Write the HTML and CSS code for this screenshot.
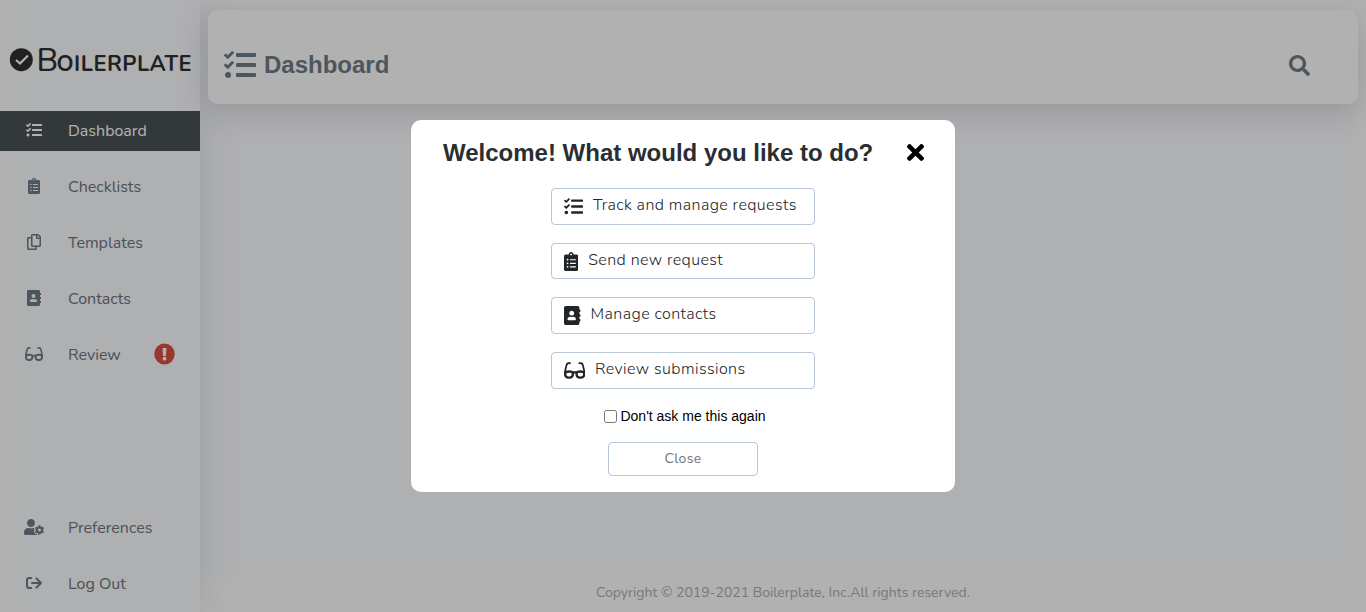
FILE: index.html
```html
<!DOCTYPE html>
<html lang="en">
<head>
<meta charset="utf-8">
<title>Dashboard</title>
<link rel="stylesheet" href="styles.css">
</head>
<body>
<svg class="sprite" aria-hidden="true">
  <symbol id="tasks" viewBox="0 0 512 512"><path d="M139.61 35.5a12 12 0 0 0-17 0L58.93 98.81l-22.7-22.12a12 12 0 0 0-17 0L3.53 92.41a12 12 0 0 0 0 17l47.59 47.4a12.78 12.78 0 0 0 17.61 0l15.59-15.62L156.52 69a12.09 12.09 0 0 0 .09-17zm0 159.19a12 12 0 0 0-17 0l-63.68 63.72-22.7-22.1a12 12 0 0 0-17 0L3.53 252a12 12 0 0 0 0 17L51 316.5a12.77 12.77 0 0 0 17.6 0l15.7-15.69 72.2-72.22a12 12 0 0 0 .09-16.9zM64 368c-26.49 0-48.59 21.5-48.59 48S37.53 464 64 464a48 48 0 0 0 0-96zm432 16H208a16 16 0 0 0-16 16v32a16 16 0 0 0 16 16h288a16 16 0 0 0 16-16v-32a16 16 0 0 0-16-16zm0-320H208a16 16 0 0 0-16 16v32a16 16 0 0 0 16 16h288a16 16 0 0 0 16-16V80a16 16 0 0 0-16-16zm0 160H208a16 16 0 0 0-16 16v32a16 16 0 0 0 16 16h288a16 16 0 0 0 16-16v-32a16 16 0 0 0-16-16z"/></symbol>
  <symbol id="clipboard" viewBox="0 0 384 512"><path d="M336 64h-80c0-35.3-28.7-64-64-64s-64 28.7-64 64H48C21.5 64 0 85.5 0 112v352c0 26.5 21.5 48 48 48h288c26.500 0 48-21.500 48-48V112c0-26.500-21.500-48-48-48zM96 424c-13.300 0-24-10.700-24-24s10.700-24 24-24 24 10.700 24 24-10.700 24-24 24zm0-96c-13.300 0-24-10.700-24-24s10.700-24 24-24 24 10.700 24 24-10.700 24-24 24zm0-96c-13.300 0-24-10.700-24-24s10.700-24 24-24 24 10.700 24 24-10.700 24-24 24zm96-192c13.300 0 24 10.700 24 24s-10.700 24-24 24-24-10.700-24-24 10.700-24 24-24zm128 368c0 4.400-3.600 8-8 8H168c-4.400 0-8-3.600-8-8v-16c0-4.400 3.600-8 8-8h144c4.400 0 8 3.600 8 8v16zm0-96c0 4.400-3.600 8-8 8H168c-4.400 0-8-3.600-8-8v-16c0-4.400 3.600-8 8-8h144c4.400 0 8 3.600 8 8v16zm0-96c0 4.400-3.600 8-8 8H168c-4.400 0-8-3.600-8-8v-16c0-4.400 3.600-8 8-8h144c4.400 0 8 3.600 8 8v16z"/></symbol>
  <symbol id="copy" viewBox="0 0 448 512"><path d="M433.941 65.941l-51.882-51.882A48 48 0 0 0 348.118 0H176c-26.51 0-48 21.49-48 48v48H48c-26.51 0-48 21.49-48 48v320c0 26.51 21.49 48 48 48h224c26.51 0 48-21.49 48-48v-48h80c26.51 0 48-21.49 48-48V99.882a48 48 0 0 0-14.059-33.941zM266 464H54a6 6 0 0 1-6-6V150a6 6 0 0 1 6-6h74v224c0 26.51 21.49 48 48 48h96v42a6 6 0 0 1-6 6zm128-96H182a6 6 0 0 1-6-6V54a6 6 0 0 1 6-6h106v88c0 13.255 10.745 24 24 24h88v202a6 6 0 0 1-6 6zm6-256h-64V48h9.632c1.591 0 3.117.632 4.243 1.757l48.368 48.368a6 6 0 0 1 1.757 4.243V112z"/></symbol>
  <symbol id="contacts" viewBox="0 0 448 512"><path d="M436 160c6.600 0 12-5.400 12-12v-40c0-6.600-5.400-12-12-12h-20V48c0-26.500-21.500-48-48-48H48C21.500 0 0 21.500 0 48v416c0 26.500 21.500 48 48 48h320c26.500 0 48-21.500 48-48v-48h20c6.600 0 12-5.400 12-12v-40c0-6.600-5.400-12-12-12h-20v-64h20c6.600 0 12-5.400 12-12v-40c0-6.600-5.400-12-12-12h-20v-64h20zm-228-32c35.300 0 64 28.700 64 64s-28.700 64-64 64-64-28.700-64-64 28.700-64 64-64zm112 236.800c0 10.600-10 19.200-22.400 19.200H118.400C106 384 96 375.400 96 364.800v-19.200c0-31.800 30.100-57.600 67.200-57.600h5c12.300 5.100 25.700 8 39.800 8s27.600-2.900 39.800-8h5c37.100 0 67.200 25.800 67.200 57.600v19.200z"/></symbol>
  <symbol id="glasses" viewBox="0 0 576 512"><path d="M574.1 280.37L528.75 98.66c-5.91-23.7-21.59-44.05-43-55.81-21.44-11.73-46.97-14.11-70.19-6.33l-15.25 5.08c-8.39 2.79-12.92 11.86-10.12 20.24l5.06 15.18c2.79 8.38 11.85 12.91 20.23 10.12l13.18-4.39c10.87-3.62 23-3.57 33.16 1.73 10.29 5.37 17.57 14.56 20.37 25.82l38.46 153.82c-22.19-6.81-49.79-12.46-81.2-12.46-34.77 0-73.98 7.02-114.85 26.74h-73.18c-40.87-19.74-80.08-26.75-114.86-26.75-31.42 0-59.02 5.65-81.21 12.46l38.46-153.83c2.79-11.25 10.09-20.45 20.38-25.81 10.16-5.3 22.28-5.35 33.15-1.73l13.17 4.39c8.38 2.79 17.44-1.74 20.23-10.12l5.06-15.18c2.8-8.38-1.73-17.45-10.12-20.24l-15.25-5.08c-23.22-7.78-48.75-5.41-70.19 6.33-21.41 11.77-37.09 32.11-43 55.8L1.9 280.37A64.218 64.218 0 0 0 0 295.86v70.25C0 429.01 51.58 480 115.2 480h37.12c60.28 0 110.37-45.94 114.88-105.37l2.93-38.63h35.75l2.93 38.63C313.31 434.06 363.4 480 423.68 480h37.12c63.62 0 115.2-50.99 115.2-113.88v-70.25c0-5.23-.64-10.43-1.9-15.5zm-370.72 89.42c-1.97 25.91-24.4 46.21-51.06 46.21H115.2C86.97 416 64 393.62 64 366.11v-37.54c18.12-6.49 43.42-12.92 72.58-12.92 23.86 0 47.26 4.33 69.93 12.92l-3.13 41.22zM512 366.12c0 27.51-22.97 49.88-51.2 49.88h-37.12c-26.67 0-49.1-20.3-51.06-46.21l-3.13-41.22c22.67-8.59 46.08-12.92 69.95-12.92 29.12 0 54.43 6.44 72.55 12.93v37.54z"/></symbol>
  <symbol id="usercog" viewBox="0 0 640 512"><path d="M610.5 373.3c2.600-14.100 2.600-28.500 0-42.600l25.800-14.900c3-1.700 4.300-5.200 3.300-8.500-6.700-21.600-18.200-41.200-33.200-57.400-2.300-2.500-6-3.100-9-1.400l-25.800 14.900c-10.900-9.300-23.400-16.500-36.900-21.300v-29.800c0-3.400-2.400-6.400-5.700-7.100-22.300-5-45-4.800-66.200 0-3.300.7-5.700 3.700-5.700 7.100v29.800c-13.500 4.800-26 12-36.900 21.300l-25.800-14.900c-2.900-1.700-6.700-1.100-9 1.400-15 16.200-26.500 35.800-33.200 57.400-1 3.300.4 6.800 3.300 8.500l25.800 14.900c-2.600 14.100-2.600 28.500 0 42.600l-25.800 14.900c-3 1.700-4.300 5.200-3.300 8.500 6.700 21.600 18.200 41.100 33.200 57.400 2.300 2.500 6 3.100 9 1.400l25.800-14.900c10.900 9.300 23.400 16.500 36.900 21.300v29.800c0 3.400 2.400 6.400 5.700 7.100 22.300 5 45 4.800 66.200 0 3.300-.7 5.700-3.700 5.700-7.100v-29.800c13.500-4.800 26-12 36.900-21.300l25.800 14.900c2.900 1.700 6.700 1.100 9-1.400 15-16.200 26.500-35.800 33.200-57.400 1-3.300-.4-6.800-3.300-8.500l-25.800-14.900zM496 400.500c-26.800 0-48.500-21.800-48.500-48.500s21.800-48.500 48.500-48.500 48.500 21.800 48.500 48.500-21.700 48.500-48.500 48.500zM224 256c70.700 0 128-57.300 128-128S294.700 0 224 0 96 57.300 96 128s57.300 128 128 128zm201.200 226.500c-2.300-1.200-4.600-2.600-6.800-3.900l-7.900 4.600c-6 3.400-12.800 5.300-19.600 5.300-10.900 0-21.400-4.600-28.900-12.600-18.300-19.800-32.300-43.900-40.200-69.600-5.500-17.700 1.900-36.400 17.900-45.700l7.900-4.600c-.1-2.600-.1-5.200 0-7.800l-7.900-4.600c-16-9.200-23.400-28-17.900-45.700.9-2.900 2.200-5.800 3.200-8.700-3.800-.3-7.500-1.200-11.400-1.200h-16.700c-22.200 10.200-46.900 16-72.900 16s-50.600-5.800-72.900-16h-16.700C60.200 288 0 348.200 0 422.400V464c0 26.500 21.500 48 48 48h352c10.100 0 19.500-3.200 27.200-8.500-1.200-3.800-2-7.700-2-11.800v-9.200z"/></symbol>
  <symbol id="logout" viewBox="0 0 16 16"><path fill="none" stroke="currentColor" stroke-width="2" stroke-linecap="round" stroke-linejoin="round" d="M5.200 2.900H3.400Q1 2.900 1 5.300v5.400q0 2.400 2.400 2.400h1.800M6 8h9M10.500 3.500 15 8l-4.500 4.500"/></symbol>
  <symbol id="search" viewBox="0 0 512 512"><path d="M505 442.700L405.300 343c-4.500-4.500-10.600-7-17-7H372c27.600-35.300 44-79.700 44-128C416 93.100 322.900 0 208 0S0 93.100 0 208s93.100 208 208 208c48.300 0 92.700-16.400 128-44v16.300c0 6.400 2.500 12.500 7 17l99.700 99.700c9.400 9.400 24.600 9.400 33.900 0l28.300-28.300c9.400-9.400 9.400-24.600.1-34zM208 336c-70.700 0-128-57.200-128-128 0-70.700 57.200-128 128-128 70.700 0 128 57.200 128 128 0 70.700-57.200 128-128 128z"/></symbol>
  <symbol id="times" viewBox="0 80 352 352"><path d="M242.72 256l100.07-100.07c12.28-12.28 12.28-32.19 0-44.48l-22.24-22.24c-12.28-12.28-32.19-12.28-44.48 0L176 189.28 75.93 89.21c-12.28-12.28-32.19-12.28-44.48 0L9.21 111.45c-12.28 12.28-12.28 32.19 0 44.48L109.28 256 9.21 356.07c-12.28 12.28-12.28 32.19 0 44.48l22.24 22.24c12.28 12.28 32.2 12.28 44.48 0L176 322.72l100.07 100.07c12.28 12.28 32.2 12.28 44.48 0l22.24-22.24c12.28-12.28 12.28-32.19 0-44.48L242.72 256z"/></symbol>
</svg>

<div class="app">
  <aside class="sidebar">
    <svg class="logo" viewBox="0 0 200 60">
      <circle cx="21.300" cy="29.700" r="11.500"/>
      <path class="logo-check" d="m16 30 4 3.500 8-8"/>
      <text class="logo-cap" x="36.500" y="41">B</text>
      <text class="logo-rest" x="56.500" y="41" textLength="135" lengthAdjust="spacing">OILERPLATE</text>
    </svg>
    <nav class="nav">
      <a class="nav-item active"><span class="nav-icon"><svg class="i16"><use href="#tasks"/></svg></span><span>Dashboard</span></a>
      <a class="nav-item"><span class="nav-icon"><svg class="i12"><use href="#clipboard"/></svg></span><span>Checklists</span></a>
      <a class="nav-item"><span class="nav-icon"><svg class="i14"><use href="#copy"/></svg></span><span>Templates</span></a>
      <a class="nav-item"><span class="nav-icon"><svg class="i14"><use href="#contacts"/></svg></span><span>Contacts</span></a>
      <a class="nav-item"><span class="nav-icon"><svg class="i18"><use href="#glasses"/></svg></span><span>Review</span>
        <svg class="alert" viewBox="0 0 21 22"><ellipse cx="10.500" cy="11" rx="10.200" ry="10.600" fill="#dc5044"/><path fill="#fff" d="M8.500 5h4l-.6 8H9.100z"/><circle cx="10.500" cy="15.700" r="1.900" fill="#fff"/></svg></a>
    </nav>
    <nav class="nav nav-bottom">
      <a class="nav-item"><span class="nav-icon"><svg class="i20"><use href="#usercog"/></svg></span><span>Preferences</span></a>
      <a class="nav-item"><span class="nav-icon"><svg class="i16"><use href="#logout"/></svg></span><span>Log Out</span></a>
    </nav>
  </aside>
  <main class="main">
    <div class="content">
      <header class="header">
        <svg class="header-icon"><use href="#tasks"/></svg>
        <h1 class="header-title">Dashboard</h1>
        <svg class="search"><use href="#search"/></svg>
      </header>
    </div>
    <footer class="footer"><span>Copyright © 2019-2021 Boilerplate, Inc.All rights reserved.</span></footer>
  </main>
</div>

<div class="overlay">
  <section class="modal">
    <div class="modal-head">
      <h2 class="modal-title">Welcome! What would you like to do?</h2>
      <svg class="close-x"><use href="#times"/></svg>
    </div>
    <div class="choices">
      <button class="choice"><svg class="c-tasks"><use href="#tasks"/></svg><span>Track and manage requests</span></button>
      <button class="choice"><svg class="c-clip"><use href="#clipboard"/></svg><span>Send new request</span></button>
      <button class="choice"><svg class="c-book"><use href="#contacts"/></svg><span>Manage contacts</span></button>
      <button class="choice"><svg class="c-glass"><use href="#glasses"/></svg><span>Review submissions</span></button>
    </div>
    <label class="ask"><input class="ask-box" type="checkbox"><span>Don't ask me this again</span></label>
    <button class="close-btn">Close</button>
  </section>
</div>
</body>
</html>
```
FILE: styles.css
```css
* { box-sizing: border-box; }
body { margin: 0; height: 612px; overflow: hidden; background: #fefefe; font-family: Nunito, Lato, "Noto Sans", sans-serif; }
svg { fill: currentColor; flex: none; display: block; }
.sprite { position: absolute; width: 0; height: 0; }
.app { display: flex; height: 612px; }

.sidebar { z-index: 1; width: 200px; flex: none; display: flex; flex-direction: column; padding: 30px 0 8px; background: linear-gradient(90deg, #fdfdfc, #fbfcfe 12%); box-shadow: 0 0 40px rgba(50, 75, 105, .14); }
.logo { width: 200px; height: 60px; color: #303030; margin-bottom: 21px; overflow: visible; }
.logo-check { fill: none; stroke: #fff; stroke-width: 2.200; }
.logo-cap { font: 500 32px Nunito, Lato, sans-serif; }
.logo-rest { font: 700 21.800px Nunito, Lato, sans-serif; }
.nav { display: flex; flex-direction: column; gap: 16px; }
.nav-bottom { margin-top: auto; }
.nav-item { display: flex; align-items: center; height: 40px; color: #6c757d; font-size: 16px; white-space: nowrap; }
.active { background: #495155; color: #fff; }
.nav-icon { width: 68px; flex: none; display: flex; justify-content: center; align-items: center; padding-bottom: 2px; color: #707b86; }
.active .nav-icon { color: #fff; }
.i12 { width: 12px; height: 16px; }
.i14 { width: 14px; height: 16px; }
.i16 { width: 16px; height: 16px; }
.i18 { width: 18px; height: 16px; }
.i20 { width: 20px; height: 16px; }
.alert { width: 21px; height: 22px; margin: 0 0 2px 33px; }

.main { flex: 1; display: flex; flex-direction: column; }
.content { flex: 1; margin: 10px 8px 0 0; padding-left: 8px; background: #fbfcff; }
.header { position: relative; z-index: 2; display: flex; align-items: center; height: 94px; padding: 16px 48px 0 16px; border-radius: 10px; background: #fefefe; color: #707b86; box-shadow: 0 8px 32px rgba(40, 44, 54, .18); }
.header-icon { width: 32px; height: 32px; }
.header-title { margin: 0 auto 0 8px; font: bold 24px "Liberation Sans", Arial, sans-serif; }
.search { width: 21px; height: 21px; }
.footer { display: flex; justify-content: center; align-items: center; height: 38px; padding-bottom: 2px; background: #fefefe; color: #adadad; font-size: 14px; white-space: nowrap; }

.overlay { position: fixed; inset: 0; z-index: 10; display: flex; align-items: center; justify-content: center; background: rgba(0, 0, 0, .3); }
.modal { width: 544px; height: 371.400px; display: flex; flex-direction: column; align-items: center; padding: 16px; border-radius: 10px; background: #fff; }
.modal-head { align-self: stretch; display: flex; justify-content: space-between; align-items: center; height: 32px; padding: 0 15px 0 16px; }
.modal-title { margin: 0; padding-top: 1.400px; font: bold 24px "Liberation Sans", Arial, sans-serif; color: #292e32; white-space: nowrap; }
.close-x { width: 17px; height: 17px; color: #000; }
.choices { display: flex; flex-direction: column; gap: 18px; margin-top: 20px; }
.choice { width: 264px; height: 36.600px; display: flex; align-items: center; padding: 0 12px; border: 1px solid #b8c6d6; border-radius: 4px; background: #fff; color: #212529; font: 300 16px Nunito, Lato, sans-serif; letter-spacing: .41px; white-space: nowrap; }
.choice span { padding-bottom: 2.800px; }
.c-tasks { width: 19px; height: 19px; margin-right: 10px; }
.c-clip { width: 14.250px; height: 19px; margin-right: 10px; }
.c-book { width: 16.600px; height: 19px; margin-right: 10px; }
.c-glass { width: 21.400px; height: 19px; margin-right: 9.600px; }
.ask { display: flex; align-items: center; margin: 19.300px 0 0 4px; gap: 3px; height: 16px; font: 14px "Liberation Sans", Arial, sans-serif; }
.ask-box { width: 13px; height: 13px; margin: 1px 0 0; }
.close-btn { width: 150px; height: 34px; margin-top: 18px; border: 1px solid #b8c6d6; border-radius: 4px; background: #fff; color: #6c757d; font: 14px Nunito, Lato, sans-serif; letter-spacing: .35px; }
```
